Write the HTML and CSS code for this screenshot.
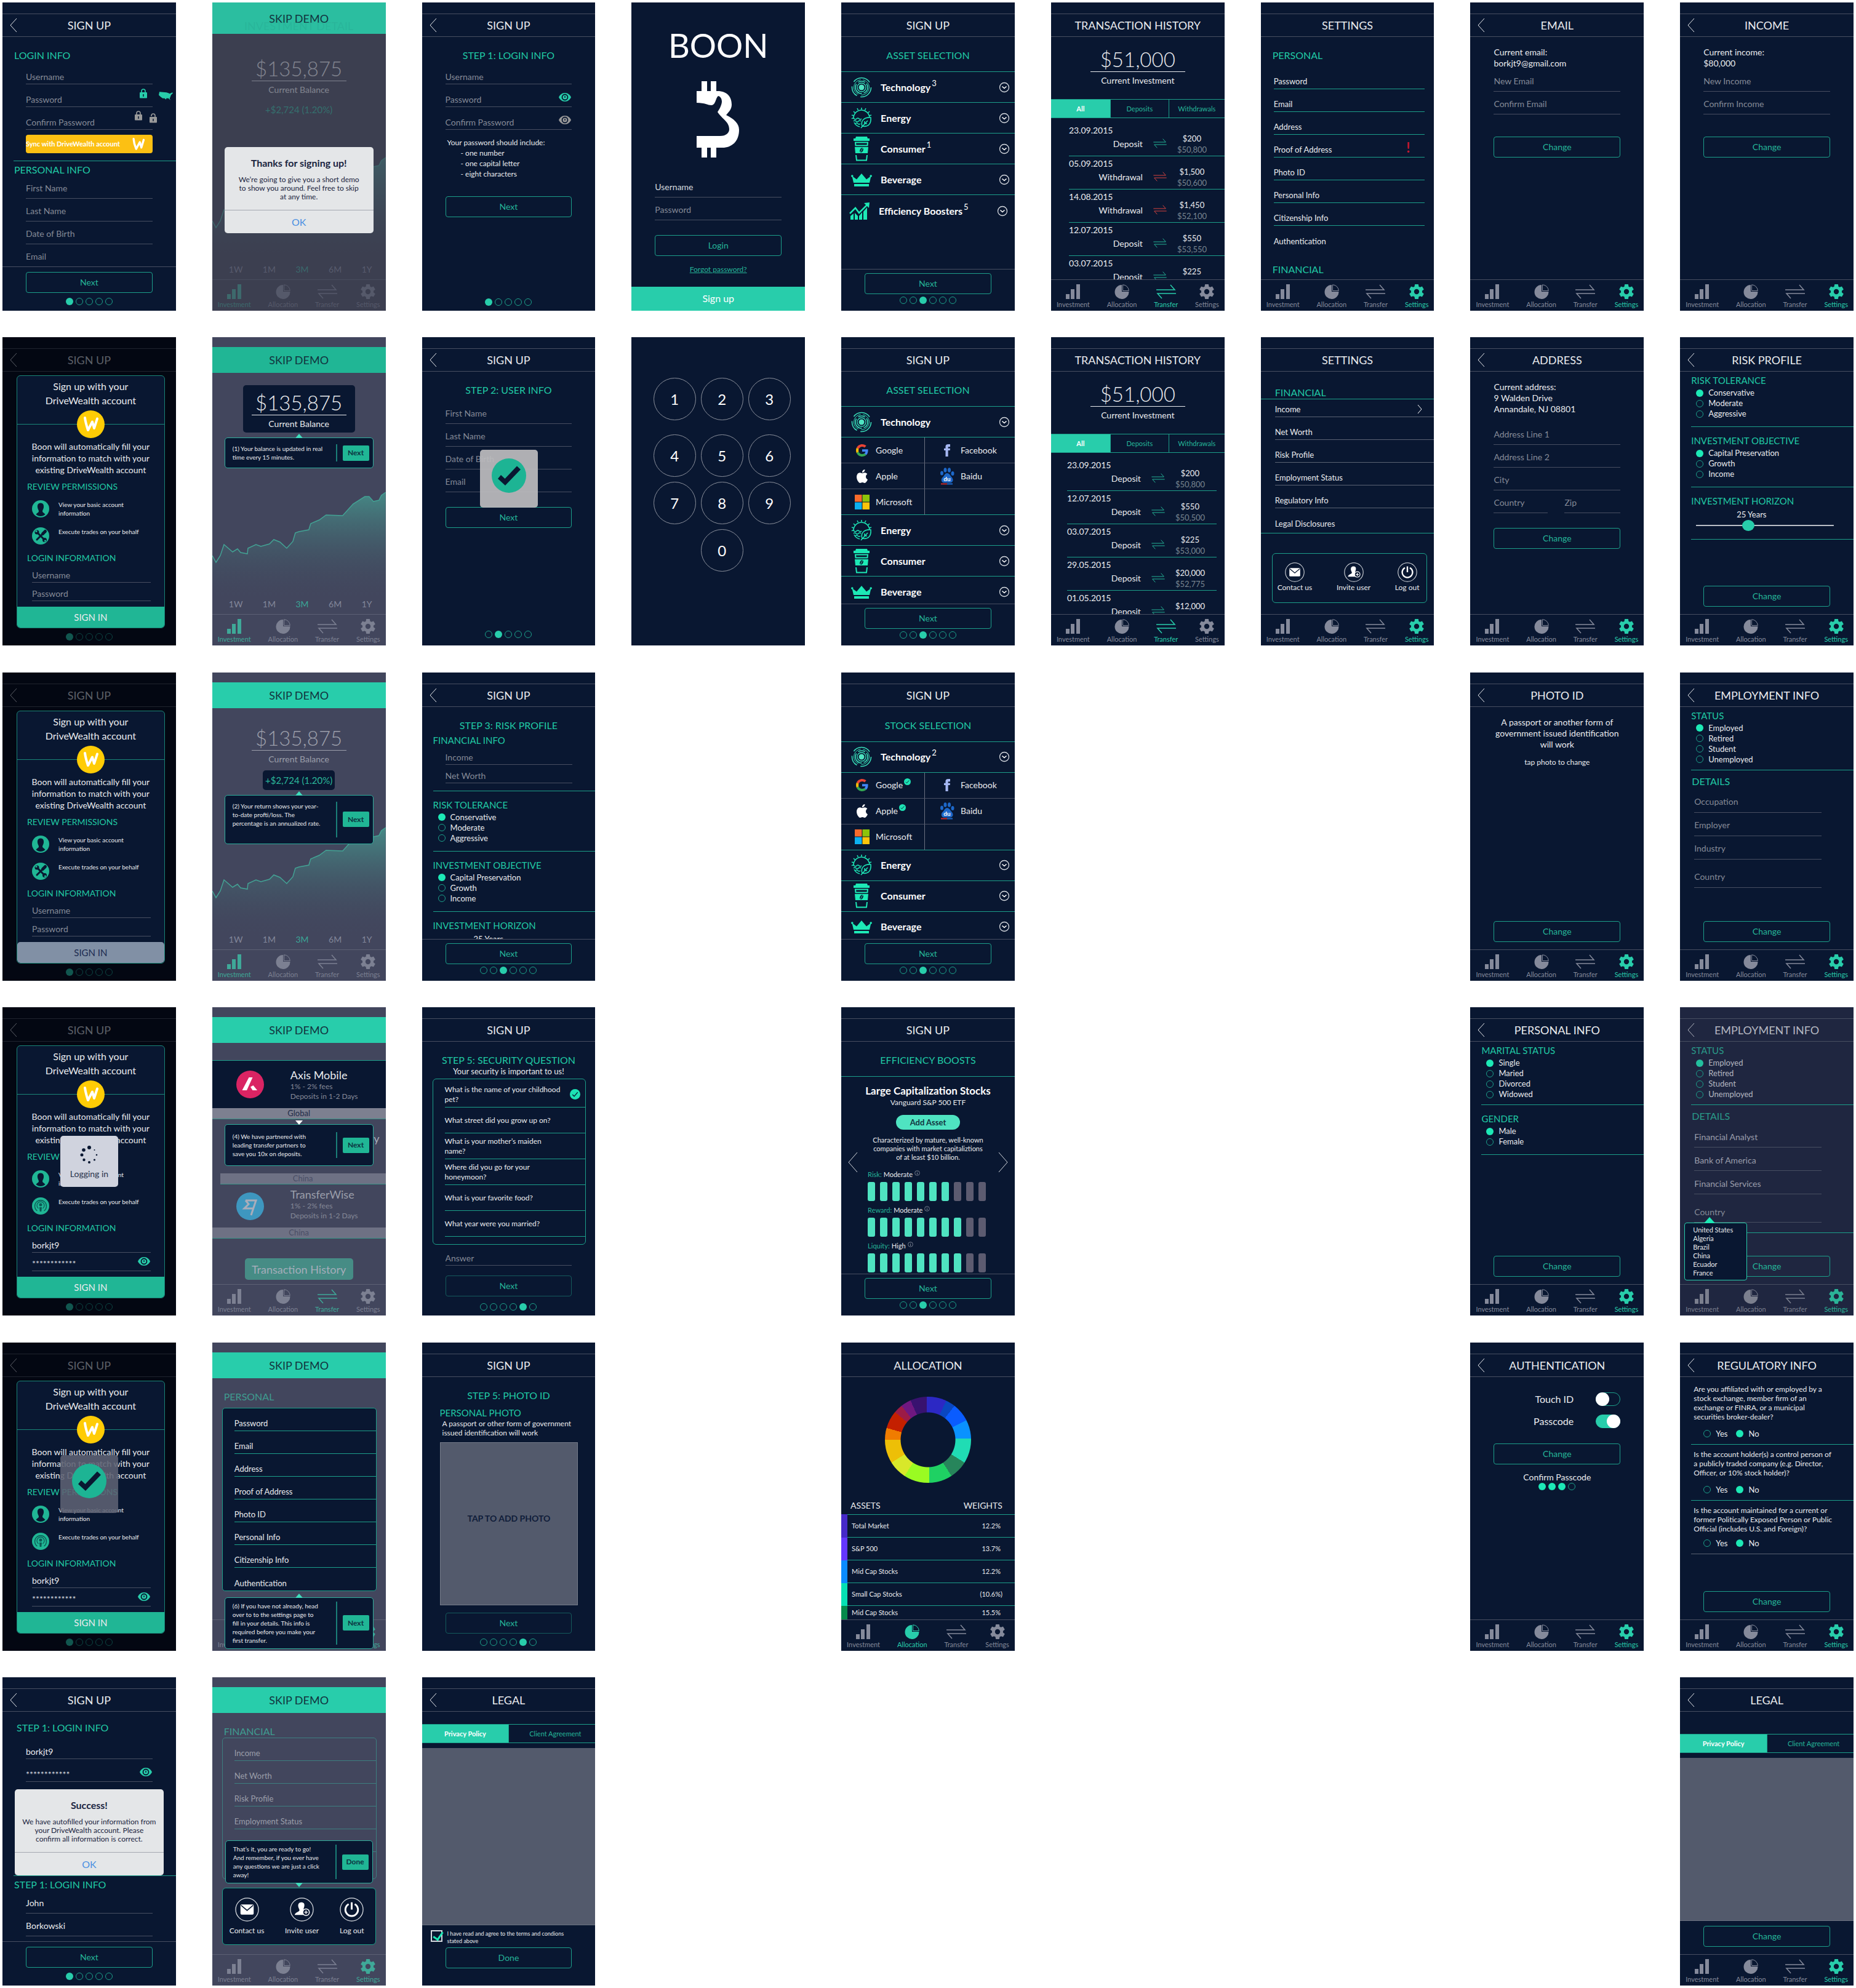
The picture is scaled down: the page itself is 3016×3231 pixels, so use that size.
FILE: index.html
```html
<!DOCTYPE html>
<html lang="en">
<head>
<meta charset="utf-8">
<title>Boon – screens</title>
<link rel="stylesheet" href="styles.css">
</head>
<body>
<svg class="sprite" aria-hidden="true">
<symbol id="back" viewBox="0 0 12 24"><path d="M11 1L1 12L11 23" fill="none" stroke="currentColor"/></symbol>
<symbol id="bars" viewBox="0 0 24 24"><path d="M0 16h6v8H0zM8 8h6v16H8zM17 0h6v24h-6z" fill="currentColor"/></symbol>
<symbol id="pie" viewBox="0 0 24 24"><path d="M12 1A11.500 11.500 0 1 0 23.500 12H12Z" fill="currentColor"/><path d="M13.500 .8A10 10 0 0 1 23.300 10.500H13.500Z" fill="none" stroke="currentColor"/></symbol>
<symbol id="swap" viewBox="0 0 32 24"><path d="M0 9H30L23 1M32 15H2L9 23" fill="none" stroke="currentColor" stroke-width="1.500"/></symbol>
<symbol id="gear" viewBox="2 2 20 20"><path fill="currentColor" d="M19.430 12.980c.04-.32.07-.64.07-.98s-.03-.66-.07-.98l2.110-1.650c.19-.15.24-.42.12-.64l-2-3.460c-.12-.22-.39-.3-.61-.22l-2.490 1c-.52-.4-1.080-.73-1.690-.98l-.38-2.650C14.460 2.180 14.250 2 14 2h-4c-.25 0-.46.18-.49.42l-.38 2.650c-.61.25-1.170.59-1.690.98l-2.490-1c-.23-.09-.49 0-.61.22l-2 3.460c-.13.22-.07.49.12.64l2.110 1.650c-.04.32-.07.65-.07.98s.03.66.07.98l-2.110 1.650c-.19.15-.24.42-.12.64l2 3.460c.12.22.39.3.61.22l2.490-1c.52.4 1.080.73 1.690.98l.38 2.650c.03.24.24.42.49.42h4c.25 0 .46-.18.49-.42l.38-2.650c.61-.25 1.170-.59 1.690-.98l2.490 1c.23.09.49 0 .61-.22l2-3.460c.12-.22.07-.49-.12-.64zM12 15.500a3.500 3.500 0 1 1 0-7a3.500 3.500 0 0 1 0 7z"/></symbol>
<symbol id="eye" viewBox="0 0 22 16"><path d="M11 1C6 1 2.500 4.500 1 8c1.500 3.500 5 7 10 7s8.500-3.500 10-7C19.500 4.500 16 1 11 1z" fill="currentColor"/><circle cx="11" cy="8" r="4.500" fill="none" stroke="#091731" stroke-width="1.800"/><path d="M11 6v3" stroke="#091731" stroke-width="1.500"/></symbol>
<symbol id="lock" viewBox="0 0 12 16"><path d="M3 7V4a3 3 0 0 1 6 0v3" fill="none" stroke="currentColor" stroke-width="1.600"/><rect y="6" width="12" height="9.500" rx="1" fill="currentColor"/><path d="M6 9v4" stroke="#091731" stroke-width="1.500"/></symbol>
<symbol id="unlock" viewBox="0 0 12 16"><path d="M3 5V4a3 3 0 0 1 6 0v3" fill="none" stroke="currentColor" stroke-width="1.600"/><rect y="6" width="12" height="9.500" rx="1" fill="currentColor"/><path d="M6 9v4" stroke="#091731" stroke-width="1.500"/></symbol>
<symbol id="usa" viewBox="0 0 22 13"><path d="M1 0L12 1L15 2L17 3L21 1L22 2L19 5L18 8L17 10L18 13L15 10L12 10L11 12L9 10L6 10L3 8L0 5Z" fill="currentColor"/></symbol>
<symbol id="wmark" viewBox="11 9 25 26"><path d="M13.500 12C14 20 16 26 18.500 31.500L25.500 18.500L28.500 29L33 14" fill="none" stroke="#fff" stroke-width="4" stroke-linecap="round" stroke-linejoin="round"/></symbol>
<symbol id="wealth" viewBox="0 0 45 45"><circle cx="22.500" cy="22.500" r="22.500" fill="#ffcc05"/><path d="M13 12C14 20 16 26 18 32L25 18.500L28 29L33 13.500" fill="none" stroke="#fff" stroke-width="4" stroke-linecap="round" stroke-linejoin="round"/></symbol>
<symbol id="person" viewBox="0 0 28 28"><circle cx="14" cy="14" r="14" fill="#20b695"/><path d="M14 4.500c-4 0-5.500 3-5 7c.4 3 1.700 4 2 6c.3 2.500-3 3-4.500 5.500c4 4 11 4 15 0C20 20.500 16.700 20 17 17.500c.3-2 1.600-3 2-6c.5-4-1-7-5-7z" fill="#091731"/></symbol>
<symbol id="tools" viewBox="0 0 28 28"><circle cx="14" cy="14" r="14" fill="#20b695"/><path d="M8 8l12 12M20 8L8 20" stroke="#091731" stroke-width="3" stroke-linecap="round"/><circle cx="8" cy="8" r="3.500" fill="#091731"/><circle cx="20.500" cy="20.500" r="3.500" fill="#091731"/><circle cx="7" cy="6.500" r="1.600" fill="#20b695"/><circle cx="21.500" cy="22" r="1.600" fill="#20b695"/><path d="M17.500 10.500l4-4" stroke="#091731" stroke-width="5" stroke-linecap="round"/></symbol>
<symbol id="cast" viewBox="0 0 28 28"><circle cx="14" cy="14" r="14" fill="#20b695"/><g fill="none" stroke="#0c5a55" stroke-width="1.300"><path d="M8.500 22a9.500 9.500 0 1 1 11 0M10.500 18a6 6 0 1 1 7 0"/></g><circle cx="14" cy="12" r="2.500" fill="#0c5a55"/><path d="M12 16h4l-.7 7h-2.600z" fill="#0c5a55"/></symbol>
<symbol id="bigcheck" viewBox="0 0 56 56"><circle cx="28" cy="28" r="28" fill="#1db494"/><path d="M10 33l5-6l6.500 6L41 12.500l6 5.500L22 44z" fill="#091731"/></symbol>
<symbol id="tick" viewBox="0 0 18 18"><circle cx="9" cy="9" r="9" fill="#1de2b4"/><path d="M4.500 9.500l3 3l6-7" fill="none" stroke="#091731" stroke-width="1.400"/></symbol>
<symbol id="down" viewBox="0 0 18 18"><circle cx="9" cy="9" r="7.500" fill="none" stroke="#d5d9df" stroke-width="1.300"/><path d="M5.500 7.500L9 10.500L12.500 7.500" fill="none" stroke="#fff" stroke-width="1.600"/></symbol>
<symbol id="tech" viewBox="0 0 34 34"><g fill="none" stroke="#38dcb8"><circle cx="17" cy="17" r="15.500" stroke-width="1.600" stroke-dasharray="26 6 18 8 30 9.300"/><circle cx="17" cy="17" r="12.500" stroke-dasharray="20 5 32 4"/><circle cx="17" cy="17" r="10" stroke-width="1.600" stroke-dasharray="12 3 22 4"/><circle cx="17" cy="17" r="7" stroke-width="1.300"/></g><circle cx="17" cy="17" r="4.500" fill="#4fe3c1"/></symbol>
<symbol id="energy" viewBox="0 0 34 34"><g fill="none" stroke="#1de2b4" stroke-width="1.600"><path d="M4 18a13 13 0 0 1 26-2M5 24a13 13 0 0 0 9 7"/><path d="M17 0v3M10 1l1.500 3M24 1l-1.500 3M4 6l2.500 2.500M30 6l-2.500 2.500M1 12l3 1M33 12l-3 1"/><path d="M1 18q2-2 4 0t4 0t4 0t4 0M4 22q2-2 4 0t4 0t4 0M7 26q2-2 4 0t4 0"/><path d="M18 30c-3-9 4-15 14-14c1 10-4 16-14 14zM16 33L27 21M22 26v-4M22 26h4"/></g></symbol>
<symbol id="cup" viewBox="0 0 26 40"><path d="M4 0h18l1 3h3v4H0V3h3zM2 17h22l-1 10H3z" fill="#1de9b6"/><path d="M3 9.500h20l-.5 5h-19zM4 30l1 8.500h16l1-8.500" fill="none" stroke="#1de9b6" stroke-width="2"/><ellipse cx="13" cy="22" rx="2.500" ry="3.800" transform="rotate(25 13 22)" fill="#091731"/><path d="M11.500 25l3-6" stroke="#1de9b6"/></symbol>
<symbol id="crown" viewBox="0 0 34 22"><path d="M4 16L1.500 5L9 10.500L17 1L25 10.500L32.500 5L30 16zM5 18h24v4H5z" fill="#1de9b6"/><circle cx="1.800" cy="5" r="1.800" fill="#1de9b6"/><circle cx="32.200" cy="5" r="1.800" fill="#1de9b6"/></symbol>
<symbol id="boost" viewBox="0 0 34 28"><path d="M2 22l5-4v10H2zM9 17l5 5v6H9zM16 22l5-6v12h-5zM23 15l6-7v20h-6z" fill="#1de9b6"/><path d="M1 18l9-9l6 8L30 3" fill="none" stroke="#1de9b6" stroke-width="2.500"/><path d="M24 1l9-1l-1 9z" fill="#1de9b6"/></symbol>
<symbol id="google" viewBox="0 0 48 48"><path fill="#EA4335" d="M24 9.500c3.540 0 6.710 1.220 9.210 3.600l6.850-6.850C35.900 2.380 30.470 0 24 0 14.620 0 6.510 5.380 2.560 13.220l7.980 6.190C12.430 13.720 17.740 9.500 24 9.500z"/><path fill="#4285F4" d="M46.980 24.550c0-1.570-.15-3.090-.38-4.550H24v9.020h12.940c-.58 2.960-2.260 5.480-4.780 7.180l7.730 6c4.510-4.180 7.090-10.360 7.090-17.650z"/><path fill="#FBBC05" d="M10.530 28.590c-.48-1.450-.76-2.990-.76-4.590s.27-3.140.76-4.590l-7.980-6.190C.92 16.460 0 20.120 0 24c0 3.880.92 7.540 2.560 10.780l7.970-6.190z"/><path fill="#34A853" d="M24 48c6.480 0 11.930-2.130 15.890-5.810l-7.730-6c-2.150 1.450-4.920 2.300-8.160 2.300-6.260 0-11.570-4.220-13.470-9.910l-7.980 6.190C6.510 42.620 14.620 48 24 48z"/></symbol>
<symbol id="apple" viewBox="0 0 24 24"><path fill="#fff" d="M12.152 6.896c-.948 0-2.415-1.078-3.960-1.040-2.040.027-3.910 1.183-4.961 3.014-2.117 3.675-.546 9.103 1.519 12.090 1.013 1.454 2.208 3.090 3.792 3.039 1.520-.065 2.090-.987 3.935-.987 1.831 0 2.350.987 3.960.948 1.637-.026 2.676-1.480 3.676-2.948 1.156-1.688 1.636-3.325 1.662-3.415-.039-.013-3.182-1.221-3.220-4.857-.026-3.040 2.480-4.494 2.597-4.559-1.429-2.090-3.623-2.324-4.390-2.376-2-.156-3.675 1.090-4.610 1.090zM15.530 3.830c.843-1.012 1.400-2.427 1.245-3.830-1.207.052-2.662.805-3.532 1.818-.780.896-1.454 2.338-1.273 3.714 1.338.104 2.715-.688 3.559-1.701"/></symbol>
<symbol id="msoft" viewBox="0 0 24 24"><path fill="#f86a2b" d="M0 0h11.500v11.500H0z"/><path fill="#8cc40a" d="M12.500 0H24v11.500H12.500z"/><path fill="#0cb0f0" d="M0 12.500h11.500V24H0z"/><path fill="#fbc40b" d="M12.500 12.500H24V24H12.500z"/></symbol>
<symbol id="fbook" viewBox="5 0 14 24"><path fill="#a5b7f2" d="M9 8H6v4h3v12h5V12h3.642L18 8h-4V6.333C14 5.378 14.192 5 15.115 5H18V0h-3.808C10.596 0 9 1.583 9 4.615z"/></symbol>
<symbol id="baidu" viewBox="0 0 24 28"><g fill="#1d68c9"><ellipse cx="3.500" cy="9" rx="2.500" ry="3.500"/><ellipse cx="9" cy="4" rx="2.500" ry="3.800"/><ellipse cx="15.500" cy="4" rx="2.500" ry="3.800"/><ellipse cx="21" cy="9.500" rx="2.500" ry="3.500"/><path d="M12 9c-4 0-4 4-7 6.500C1 19 3 25 7 24.500h10c5 0 6-5.500 2.500-9C17 13 16 9 12 9z"/></g><text x="12" y="22" text-anchor="middle" font-family="Lato, sans-serif" font-weight="700" font-size="10" fill="#fff">du</text><path d="M2 26.500h10" stroke="#c22a2a" stroke-width="2"/><path d="M12 26.500h9" stroke="#1d68c9" stroke-width="2"/></symbol>
<symbol id="mail" viewBox="0 0 40 40"><circle cx="20" cy="20" r="19" fill="none" stroke="#dfe2e6" stroke-width="1.300"/><rect x="9" y="11.500" width="22" height="17" rx="2" fill="#fff"/><path d="M10 13l10 8.500L30 13" fill="none" stroke="#091731" stroke-width="1.600"/></symbol>
<symbol id="invite" viewBox="0 0 40 40"><circle cx="20" cy="20" r="19" fill="none" stroke="#dfe2e6" stroke-width="1.300"/><path d="M19 8c-4 0-5.500 3-5 7c.5 3 2 4 2 6c0 3-7 3-8 8h16v-7c-2-1-1-4 0-7c1-5-1-7-5-7z" fill="#fff"/><circle cx="27" cy="24.500" r="5.500" fill="#091731" stroke="#fff" stroke-width="1.500"/><path d="M27 21.500v6M24 24.500h6" stroke="#fff" stroke-width="1.500"/></symbol>
<symbol id="power" viewBox="0 0 40 40"><circle cx="20" cy="20" r="19" fill="none" stroke="#dfe2e6" stroke-width="1.300"/><path d="M15 11a10.500 10.500 0 1 0 10 0M20 8v12" fill="none" stroke="#fff" stroke-width="3"/></symbol>
<symbol id="axis" viewBox="0 0 45 45"><circle cx="22.500" cy="22.500" r="22.500" fill="#da2463"/><path d="M20.500 11h6L17 32H9.500zM23 26.500l4.500-2.500L34 32h-7.500z" fill="#fff"/></symbol>
<symbol id="wise" viewBox="0 0 45 45"><circle cx="22.500" cy="22.500" r="22.500" fill="#3e97bf"/><path d="M15 13H32L24 37M15 13L20 19L13 26H26.500" fill="none" stroke="#a9adba" stroke-width="3"/></symbol>
<symbol id="boon" viewBox="0 0 70 124"><path fill="#fff" d="M8 0h9v16h6V0h9v16h2C50 16 57 26 57 38C57 46 52 50 48 55C60 61 69 68 69 79C69 98 57 108 42 108H32V124H23V108H17V124H8V108H0V89H38C48 89 53 84 53 78C53 66 42 62 34 50C37 46 41 38 41 33C41 27 37 24 35 24C31 27 31 39 24 39C18 39 14 35 0 35V16H8Z"/></symbol>
<symbol id="spin" viewBox="0 0 30 30"><g fill="#091731"><circle cx="15" cy="3" r="3"/><circle cx="6" cy="7" r="2.800"/><circle cx="3" cy="15" r="2.500"/><circle cx="6.500" cy="23" r="2.200"/><circle cx="15" cy="27" r="2"/><circle cx="23.500" cy="23" r="1.600"/><circle cx="27" cy="15" r="1.300"/><circle cx="23.500" cy="7" r="1"/></g></symbol>
<symbol id="info" viewBox="0 0 10 10"><circle cx="5" cy="5" r="4.300" fill="none" stroke="#9aa0ad" stroke-width=".8"/><path d="M5 2.500v.8M5 4.500v3" stroke="#9aa0ad"/></symbol>
<symbol id="chart" viewBox="0 0 282 180" preserveAspectRatio="none"><linearGradient id="fade" x1="0" y1="0" x2="0" y2="1"><stop offset="0" stop-color="#469a90" stop-opacity=".8"/><stop offset="1" stop-color="#42465d" stop-opacity="0"/></linearGradient><path d="M0 105L6 116L13 105L19 87L33 99L41 94L46 100L57 102L58 93L71 87L79 90L93 86L100 79L110 83L121 93L131 82L135 68L141 66L157 63L160 53L174 47L185 39L212 40L229 21L248 9L255 9L262 17L271 15L275 7L282 2V180H0Z" fill="url(#fade)"/><path d="M0 105L6 116L13 105L19 87L33 99L41 94L46 100L57 102L58 93L71 87L79 90L93 86L100 79L110 83L121 93L131 82L135 68L141 66L157 63L160 53L174 47L185 39L212 40L229 21L248 9L255 9L262 17L271 15L275 7L282 2" fill="none" stroke="#43a294" stroke-width="1.500"/></symbol>
</svg>
<main class="board">

<!-- Row 1 -->
<section class="phone">
<header class="bar"><a class="back" href="#" aria-label="Back"><svg><use href="#back"/></svg></a><h2>SIGN UP</h2></header>
<div class="body">
<h3 class="sec mt20">LOGIN INFO</h3>
<div class="form"><input class="field tight" placeholder="Username" aria-label="Username"><input class="field tight" placeholder="Password" aria-label="Password"><input class="field tight" placeholder="Confirm Password" aria-label="Confirm password"><button class="sync mt8"><span>Sync with DriveWealth account</span><svg width="21" height="22"><use href="#wmark"/></svg></button></div>
<hr class="rule mt12"><h3 class="sec mt4">PERSONAL INFO</h3>
<div class="form"><input class="field" placeholder="First Name" aria-label="First name"><input class="field" placeholder="Last Name" aria-label="Last name"><input class="field" placeholder="Date of Birth" aria-label="Date of birth"><input class="field" placeholder="Email" aria-label="Email"></div>
</div>
<footer class="foot tall"><button class="btn">Next</button><div class="dots"><i class="on"></i><i></i><i></i><i></i><i></i></div></footer>
<svg class="pin lock-a" width="12" height="16"><use href="#lock"/></svg><svg class="pin usa" width="23" height="14"><use href="#usa"/></svg><svg class="pin lock-b" width="12" height="16"><use href="#lock"/></svg><svg class="pin lock-c" width="12" height="16"><use href="#unlock"/></svg>
</section>

<section class="phone demo faint">
<button class="skip big">SKIP DEMO</button>
<h2 class="ghost">INVESTMENT DETAIL</h2>
<svg class="chart"><use href="#chart"/></svg>
<div class="body"><div class="balance mt16"><strong>$135,875</strong><span>Current Balance</span></div><p class="gain mt12">+$2,724 (1.20%)</p></div>
<div class="range"><span>1W</span><span>1M</span><b>3M</b><span>6M</span><span>1Y</span></div>
<nav class="tabs t1"><a href="#"><svg><use href="#bars"/></svg>Investment</a><a href="#"><svg><use href="#pie"/></svg>Allocation</a><a href="#"><svg class="w"><use href="#swap"/></svg>Transfer</a><a href="#"><svg><use href="#gear"/></svg>Settings</a></nav>
<div class="modal thanks"><h3>Thanks for signing up!</h3><p>We’re going to give you a short demo<br>to show you around. Feel free to skip<br>at any time.</p><button>OK</button></div>
</section>

<section class="phone">
<header class="bar"><a class="back" href="#" aria-label="Back"><svg><use href="#back"/></svg></a><h2>SIGN UP</h2></header>
<div class="body">
<h3 class="sec mid mt20">STEP 1: LOGIN INFO</h3>
<div class="form"><input class="field tight" placeholder="Username" aria-label="Username"><label class="secret"><input class="field tight" placeholder="Password" aria-label="Password"><svg><use href="#eye"/></svg></label><label class="secret off"><input class="field tight" placeholder="Confirm Password" aria-label="Confirm password"><svg><use href="#eye"/></svg></label>
<div class="hint mt12"><p>Your password should include:</p><ul><li>- one number</li><li>- one capital letter</li><li>- eight characters</li></ul></div>
<button class="btn mt28">Next</button></div>
<div class="dots push mb8"><i class="on"></i><i></i><i></i><i></i><i></i></div>
</div>
</section>

<section class="phone">
<h1 class="brand">BOON</h1>
<svg class="logo"><use href="#boon"/></svg>
<div class="form mt28"><input class="field bright" placeholder="Username" aria-label="Username"><input class="field" placeholder="Password" aria-label="Password"><button class="btn mt24">Login</button></div>
<a class="forgot mt12" href="#">Forgot password?</a>
<button class="signup push">Sign up</button>
</section>

<section class="phone">
<header class="bar"><h2>SIGN UP</h2></header>
<div class="body">
<h3 class="sec mid mt20">ASSET SELECTION</h3>
<ul class="assets mt16">
<li><svg width="34" height="34"><use href="#tech"/></svg><span>Technology<sup>3</sup></span><svg width="18" height="18"><use href="#down"/></svg></li>
<li><svg width="34" height="34"><use href="#energy"/></svg><span>Energy</span><svg width="18" height="18"><use href="#down"/></svg></li>
<li><svg width="26" height="40"><use href="#cup"/></svg><span>Consumer<sup>1</sup></span><svg width="18" height="18"><use href="#down"/></svg></li>
<li><svg width="34" height="22"><use href="#crown"/></svg><span>Beverage</span><svg width="18" height="18"><use href="#down"/></svg></li>
<li class="last"><svg width="34" height="28"><use href="#boost"/></svg><span>Efficiency Boosters<sup>5</sup></span><svg width="18" height="18"><use href="#down"/></svg></li>
</ul></div>
<footer class="foot"><button class="btn">Next</button><div class="dots"><i></i><i></i><i class="on"></i><i></i><i></i><i></i></div></footer>
</section>

<section class="phone">
<header class="bar"><h2>TRANSACTION HISTORY</h2></header>
<div class="body">
<div class="balance mt16"><strong>$51,000</strong><span>Current Investment</span></div>
<div class="switch three mt20"><button class="on">All</button><button>Deposits</button><button>Withdrawals</button></div>
<ul class="moves">
<li><div><time>23.09.2015</time><span>Deposit</span></div><svg><use href="#swap"/></svg><p>$200<small>$50,800</small></p></li>
<li class="out"><div><time>05.09.2015</time><span>Withdrawal</span></div><svg><use href="#swap"/></svg><p>$1,500<small>$50,600</small></p></li>
<li class="out"><div><time>14.08.2015</time><span>Withdrawal</span></div><svg><use href="#swap"/></svg><p>$1,450<small>$52,100</small></p></li>
<li><div><time>12.07.2015</time><span>Deposit</span></div><svg><use href="#swap"/></svg><p>$550<small>$53,550</small></p></li>
<li><div><time>03.07.2015</time><span>Deposit</span></div><svg><use href="#swap"/></svg><p>$225</p></li>
</ul></div>
<nav class="tabs t3"><a href="#"><svg><use href="#bars"/></svg>Investment</a><a href="#"><svg><use href="#pie"/></svg>Allocation</a><a href="#"><svg class="w"><use href="#swap"/></svg>Transfer</a><a href="#"><svg><use href="#gear"/></svg>Settings</a></nav>
</section>

<section class="phone">
<header class="bar"><h2>SETTINGS</h2></header>
<div class="body">
<h3 class="sec mt20">PERSONAL</h3>
<ul class="menu mt8"><li>Password</li><li>Email</li><li>Address</li><li>Proof of Address<b class="alert">!</b></li><li>Photo ID</li><li>Personal Info</li><li>Citizenship Info</li><li>Authentication</li></ul>
<h3 class="sec mt24">FINANCIAL</h3></div>
<nav class="tabs t4"><a href="#"><svg><use href="#bars"/></svg>Investment</a><a href="#"><svg><use href="#pie"/></svg>Allocation</a><a href="#"><svg class="w"><use href="#swap"/></svg>Transfer</a><a href="#"><svg><use href="#gear"/></svg>Settings</a></nav>
</section>

<section class="phone">
<header class="bar"><a class="back" href="#" aria-label="Back"><svg><use href="#back"/></svg></a><h2>EMAIL</h2></header>
<div class="body"><div class="form mt16"><p class="now">Current email:<br>borkjt9@gmail.com</p><input class="field" placeholder="New Email" aria-label="New email"><input class="field" placeholder="Confirm Email" aria-label="Confirm email"><button class="btn mt36">Change</button></div></div>
<nav class="tabs t4"><a href="#"><svg><use href="#bars"/></svg>Investment</a><a href="#"><svg><use href="#pie"/></svg>Allocation</a><a href="#"><svg class="w"><use href="#swap"/></svg>Transfer</a><a href="#"><svg><use href="#gear"/></svg>Settings</a></nav>
</section>

<section class="phone">
<header class="bar"><a class="back" href="#" aria-label="Back"><svg><use href="#back"/></svg></a><h2>INCOME</h2></header>
<div class="body"><div class="form mt16"><p class="now">Current income:<br>$80,000</p><input class="field" placeholder="New Income" aria-label="New income"><input class="field" placeholder="Confirm Income" aria-label="Confirm income"><button class="btn mt36">Change</button></div></div>
<nav class="tabs t4"><a href="#"><svg><use href="#bars"/></svg>Investment</a><a href="#"><svg><use href="#pie"/></svg>Allocation</a><a href="#"><svg class="w"><use href="#swap"/></svg>Transfer</a><a href="#"><svg><use href="#gear"/></svg>Settings</a></nav>
</section>

<!-- Row 2 -->
<section class="phone dark">
<header class="bar"><a class="back" href="#" aria-label="Back"><svg><use href="#back"/></svg></a><h2>SIGN UP</h2></header>
<div class="partner">
<h3>Sign up with your<br>DriveWealth account</h3><svg class="seal"><use href="#wealth"/></svg>
<p class="lead">Boon will automatically fill your<br>information to match with your<br>existing DriveWealth account</p>
<h4>REVIEW PERMISSIONS</h4>
<ul class="perms"><li><svg><use href="#person"/></svg>View your basic account<br>information</li><li><svg><use href="#tools"/></svg>Execute trades on your behalf</li></ul>
<h4>LOGIN INFORMATION</h4>
<div class="login"><input class="field short" placeholder="Username" aria-label="Username"><input class="field short" placeholder="Password" aria-label="Password"></div>
<button class="signin">SIGN IN</button></div>
<div class="dots push mb8"><i class="on"></i><i></i><i></i><i></i><i></i></div>
</section>

<section class="phone demo">
<button class="skip deep">SKIP DEMO</button>
<svg class="chart"><use href="#chart"/></svg>
<div class="body"><div class="balance lit mt20"><strong>$135,875</strong><span>Current Balance</span></div>
<div class="tip up mt8"><p>(1) Your balance is updated in real<br>time every 15 minutes.</p><button>Next</button></div></div>
<div class="range"><span>1W</span><span>1M</span><b>3M</b><span>6M</span><span>1Y</span></div>
<nav class="tabs t1"><a href="#"><svg><use href="#bars"/></svg>Investment</a><a href="#"><svg><use href="#pie"/></svg>Allocation</a><a href="#"><svg class="w"><use href="#swap"/></svg>Transfer</a><a href="#"><svg><use href="#gear"/></svg>Settings</a></nav>
</section>

<section class="phone">
<header class="bar"><a class="back" href="#" aria-label="Back"><svg><use href="#back"/></svg></a><h2>SIGN UP</h2></header>
<div class="body"><h3 class="sec mid mt20">STEP 2: USER INFO</h3>
<div class="form mt8"><input class="field" placeholder="First Name" aria-label="First name"><input class="field" placeholder="Last Name" aria-label="Last name"><input class="field" placeholder="Date of Birth" aria-label="Date of birth"><input class="field" placeholder="Email" aria-label="Email"><button class="btn mt24">Next</button></div>
<div class="dots push mb12"><i></i><i class="on"></i><i></i><i></i><i></i></div></div>
<div class="pop done"><svg width="56" height="56"><use href="#bigcheck"/></svg></div>
</section>

<section class="phone">
<div class="keys"><button>1</button><button>2</button><button>3</button><button>4</button><button>5</button><button>6</button><button>7</button><button>8</button><button>9</button><button class="zero">0</button></div>
</section>

<section class="phone">
<header class="bar"><h2>SIGN UP</h2></header>
<div class="body">
<h3 class="sec mid mt20">ASSET SELECTION</h3>
<ul class="assets mt16">
<li><svg width="34" height="34"><use href="#tech"/></svg><span>Technology</span><svg width="18" height="18"><use href="#down"/></svg></li></ul>
<ul class="stocks"><li><svg width="20" height="20"><use href="#google"/></svg>Google</li><li><svg width="12" height="20"><use href="#fbook"/></svg>Facebook</li><li><svg width="22" height="24"><use href="#apple"/></svg>Apple</li><li><svg width="24" height="28"><use href="#baidu"/></svg>Baidu</li><li><svg width="24" height="24"><use href="#msoft"/></svg>Microsoft</li><li></li></ul>
<ul class="assets">
<li><svg width="34" height="34"><use href="#energy"/></svg><span>Energy</span><svg width="18" height="18"><use href="#down"/></svg></li>
<li><svg width="26" height="40"><use href="#cup"/></svg><span>Consumer</span><svg width="18" height="18"><use href="#down"/></svg></li>
<li><svg width="34" height="22"><use href="#crown"/></svg><span>Beverage</span><svg width="18" height="18"><use href="#down"/></svg></li>
</ul></div>
<footer class="foot"><button class="btn">Next</button><div class="dots"><i></i><i></i><i class="on"></i><i></i><i></i><i></i></div></footer>
</section>

<section class="phone">
<header class="bar"><h2>TRANSACTION HISTORY</h2></header>
<div class="body">
<div class="balance mt16"><strong>$51,000</strong><span>Current Investment</span></div>
<div class="switch three mt20"><button class="on">All</button><button>Deposits</button><button>Withdrawals</button></div>
<ul class="moves inset">
<li><div><time>23.09.2015</time><span>Deposit</span></div><svg><use href="#swap"/></svg><p>$200<small>$50,800</small></p></li>
<li><div><time>12.07.2015</time><span>Deposit</span></div><svg><use href="#swap"/></svg><p>$550<small>$50,500</small></p></li>
<li><div><time>03.07.2015</time><span>Deposit</span></div><svg><use href="#swap"/></svg><p>$225<small>$53,000</small></p></li>
<li><div><time>29.05.2015</time><span>Deposit</span></div><svg><use href="#swap"/></svg><p>$20,000<small>$52,775</small></p></li>
<li><div><time>01.05.2015</time><span>Deposit</span></div><svg><use href="#swap"/></svg><p>$12,000</p></li>
</ul></div>
<nav class="tabs t3"><a href="#"><svg><use href="#bars"/></svg>Investment</a><a href="#"><svg><use href="#pie"/></svg>Allocation</a><a href="#"><svg class="w"><use href="#swap"/></svg>Transfer</a><a href="#"><svg><use href="#gear"/></svg>Settings</a></nav>
</section>

<section class="phone">
<header class="bar"><h2>SETTINGS</h2></header>
<div class="body">
<h3 class="sec in mt24">FINANCIAL</h3>
<ul class="menu plain"><li>Income<svg width="8" height="16"><path d="M1 1L7 8L1 15" fill="none" stroke="#fff"/></svg></li><li>Net Worth</li><li>Risk Profile</li><li>Employment Status</li><li>Regulatory Info</li><li>Legal Disclosures</li></ul>
<div class="quick mt32"><a href="#"><svg><use href="#mail"/></svg>Contact us</a><a href="#"><svg><use href="#invite"/></svg>Invite user</a><a href="#"><svg><use href="#power"/></svg>Log out</a></div></div>
<nav class="tabs t4"><a href="#"><svg><use href="#bars"/></svg>Investment</a><a href="#"><svg><use href="#pie"/></svg>Allocation</a><a href="#"><svg class="w"><use href="#swap"/></svg>Transfer</a><a href="#"><svg><use href="#gear"/></svg>Settings</a></nav>
</section>

<section class="phone">
<header class="bar"><a class="back" href="#" aria-label="Back"><svg><use href="#back"/></svg></a><h2>ADDRESS</h2></header>
<div class="body"><div class="form mt16"><p class="now">Current address:<br>9 Walden Drive<br>Annandale, NJ 08801</p><input class="field mt12" placeholder="Address Line 1" aria-label="Address line 1"><input class="field" placeholder="Address Line 2" aria-label="Address line 2"><input class="field" placeholder="City" aria-label="City"><div class="pair"><input class="field" placeholder="Country" aria-label="Country"><input class="field" placeholder="Zip" aria-label="Zip"></div><button class="btn mt24">Change</button></div></div>
<nav class="tabs t4"><a href="#"><svg><use href="#bars"/></svg>Investment</a><a href="#"><svg><use href="#pie"/></svg>Allocation</a><a href="#"><svg class="w"><use href="#swap"/></svg>Transfer</a><a href="#"><svg><use href="#gear"/></svg>Settings</a></nav>
</section>

<section class="phone">
<header class="bar"><a class="back" href="#" aria-label="Back"><svg><use href="#back"/></svg></a><h2>RISK PROFILE</h2></header>
<div class="body">
<div class="grp mt4"><h3>RISK TOLERANCE</h3><div class="radios"><label><input type="radio" name="a1" checked>Conservative</label><label><input type="radio" name="a1">Moderate</label><label><input type="radio" name="a1">Aggressive</label></div></div>
<div class="grp mt12"><h3>INVESTMENT OBJECTIVE</h3><div class="radios"><label><input type="radio" name="a2" checked>Capital Preservation</label><label><input type="radio" name="a2">Growth</label><label><input type="radio" name="a2">Income</label></div></div>
<div class="grp mt12"><h3>INVESTMENT HORIZON</h3><label class="years"><span>25 Years</span><input type="range" min="0" max="68" value="25"></label></div>
<button class="btn push mb12 solo">Change</button></div>
<nav class="tabs t4"><a href="#"><svg><use href="#bars"/></svg>Investment</a><a href="#"><svg><use href="#pie"/></svg>Allocation</a><a href="#"><svg class="w"><use href="#swap"/></svg>Transfer</a><a href="#"><svg><use href="#gear"/></svg>Settings</a></nav>
</section>

<!-- Row 3 -->
<section class="phone dark">
<header class="bar"><a class="back" href="#" aria-label="Back"><svg><use href="#back"/></svg></a><h2>SIGN UP</h2></header>
<div class="partner">
<h3>Sign up with your<br>DriveWealth account</h3><svg class="seal"><use href="#wealth"/></svg>
<p class="lead">Boon will automatically fill your<br>information to match with your<br>existing DriveWealth account</p>
<h4>REVIEW PERMISSIONS</h4>
<ul class="perms"><li><svg><use href="#person"/></svg>View your basic account<br>information</li><li><svg><use href="#tools"/></svg>Execute trades on your behalf</li></ul>
<h4>LOGIN INFORMATION</h4>
<div class="login"><input class="field short" placeholder="Username" aria-label="Username"><input class="field short" placeholder="Password" aria-label="Password"></div>
<button class="signin idle">SIGN IN</button></div>
<div class="dots push mb8"><i class="on"></i><i></i><i></i><i></i><i></i></div>
</section>

<section class="phone demo">
<button class="skip">SKIP DEMO</button>
<svg class="chart"><use href="#chart"/></svg>
<div class="body"><div class="balance dim mt28"><strong>$135,875</strong><span>Current Balance</span></div><p class="gain lit mt8">+$2,724 (1.20%)</p>
<div class="tip up high mt8"><p>(2) Your return shows your year-<br>to-date profti/loss. The<br>percentage is an annualized rate.</p><button>Next</button></div></div>
<div class="range"><span>1W</span><span>1M</span><b>3M</b><span>6M</span><span>1Y</span></div>
<nav class="tabs t1"><a href="#"><svg><use href="#bars"/></svg>Investment</a><a href="#"><svg><use href="#pie"/></svg>Allocation</a><a href="#"><svg class="w"><use href="#swap"/></svg>Transfer</a><a href="#"><svg><use href="#gear"/></svg>Settings</a></nav>
</section>

<section class="phone">
<header class="bar"><a class="back" href="#" aria-label="Back"><svg><use href="#back"/></svg></a><h2>SIGN UP</h2></header>
<div class="body"><h3 class="sec mid mt20">STEP 3: RISK PROFILE</h3>
<div class="grp mt4"><h3>FINANCIAL INFO</h3><div class="login"><input class="field short" placeholder="Income" aria-label="Income"><input class="field short" placeholder="Net Worth" aria-label="Net worth"></div></div>
<div class="grp mt12"><h3>RISK TOLERANCE</h3><div class="radios"><label><input type="radio" name="b1" checked>Conservative</label><label><input type="radio" name="b1">Moderate</label><label><input type="radio" name="b1">Aggressive</label></div></div>
<div class="grp mt12"><h3>INVESTMENT OBJECTIVE</h3><div class="radios"><label><input type="radio" name="b2" checked>Capital Preservation</label><label><input type="radio" name="b2">Growth</label><label><input type="radio" name="b2">Income</label></div></div>
<div class="grp mt12"><h3>INVESTMENT HORIZON</h3><p class="years">25 Years</p></div></div>
<footer class="foot"><button class="btn">Next</button><div class="dots"><i></i><i></i><i class="on"></i><i></i><i></i><i></i></div></footer>
</section>

<section class="phone c5">
<header class="bar"><h2>SIGN UP</h2></header>
<div class="body">
<h3 class="sec mid mt20">STOCK SELECTION</h3>
<ul class="assets mt16">
<li><svg width="34" height="34"><use href="#tech"/></svg><span>Technology<sup>2</sup></span><svg width="18" height="18"><use href="#down"/></svg></li></ul>
<ul class="stocks"><li><svg width="20" height="20"><use href="#google"/></svg>Google<svg class="tick"><use href="#tick"/></svg></li><li><svg width="12" height="20"><use href="#fbook"/></svg>Facebook</li><li><svg width="22" height="24"><use href="#apple"/></svg>Apple<svg class="tick"><use href="#tick"/></svg></li><li><svg width="24" height="28"><use href="#baidu"/></svg>Baidu</li><li><svg width="24" height="24"><use href="#msoft"/></svg>Microsoft</li><li></li></ul>
<ul class="assets">
<li><svg width="34" height="34"><use href="#energy"/></svg><span>Energy</span><svg width="18" height="18"><use href="#down"/></svg></li>
<li><svg width="26" height="40"><use href="#cup"/></svg><span>Consumer</span><svg width="18" height="18"><use href="#down"/></svg></li>
<li><svg width="34" height="22"><use href="#crown"/></svg><span>Beverage</span><svg width="18" height="18"><use href="#down"/></svg></li>
</ul></div>
<footer class="foot"><button class="btn">Next</button><div class="dots"><i></i><i></i><i class="on"></i><i></i><i></i><i></i></div></footer>
</section>

<section class="phone c8">
<header class="bar"><a class="back" href="#" aria-label="Back"><svg><use href="#back"/></svg></a><h2>PHOTO ID</h2></header>
<div class="body"><p class="now center mt16">A passport or another form of<br>government issued identification<br>will work</p><p class="small center mt12">tap photo to change</p>
<button class="btn push mb12 solo">Change</button></div>
<nav class="tabs t4"><a href="#"><svg><use href="#bars"/></svg>Investment</a><a href="#"><svg><use href="#pie"/></svg>Allocation</a><a href="#"><svg class="w"><use href="#swap"/></svg>Transfer</a><a href="#"><svg><use href="#gear"/></svg>Settings</a></nav>
</section>

<section class="phone">
<header class="bar"><a class="back" href="#" aria-label="Back"><svg><use href="#back"/></svg></a><h2>EMPLOYMENT INFO</h2></header>
<div class="body">
<div class="grp near mt4"><h3>STATUS</h3><div class="radios"><label><input type="radio" name="c1" checked>Employed</label><label><input type="radio" name="c1">Retired</label><label><input type="radio" name="c1">Student</label><label><input type="radio" name="c1">Unemployed</label></div></div>
<h3 class="sec mt8">DETAILS</h3>
<div class="job mt4"><input class="field" placeholder="Occupation" aria-label="Occupation"><input class="field" placeholder="Employer" aria-label="Employer"><input class="field" placeholder="Industry" aria-label="Industry"><input class="field mt8" placeholder="Country" aria-label="Country"></div>
<button class="btn push mb12 solo">Change</button></div>
<nav class="tabs t4"><a href="#"><svg><use href="#bars"/></svg>Investment</a><a href="#"><svg><use href="#pie"/></svg>Allocation</a><a href="#"><svg class="w"><use href="#swap"/></svg>Transfer</a><a href="#"><svg><use href="#gear"/></svg>Settings</a></nav>
</section>

<!-- Row 4 -->
<section class="phone dark">
<header class="bar"><a class="back" href="#" aria-label="Back"><svg><use href="#back"/></svg></a><h2>SIGN UP</h2></header>
<div class="partner">
<h3>Sign up with your<br>DriveWealth account</h3><svg class="seal"><use href="#wealth"/></svg>
<p class="lead">Boon will automatically fill your<br>information to match with your<br>existing DriveWealth account</p>
<h4>REVIEW PERMISSIONS</h4>
<ul class="perms"><li><svg><use href="#person"/></svg>View your basic account<br>information</li><li><svg><use href="#cast"/></svg>Execute trades on your behalf</li></ul>
<h4>LOGIN INFORMATION</h4>
<div class="login"><input class="field short" value="borkjt9" aria-label="Username"><label class="secret"><input class="field short" value="************" aria-label="Password"><svg><use href="#eye"/></svg></label></div>
<button class="signin">SIGN IN</button></div>
<div class="dots push mb8"><i class="on"></i><i></i><i></i><i></i><i></i></div>
<div class="pop wait"><svg width="30" height="30"><use href="#spin"/></svg>Logging in</div>
</section>

<section class="phone demo">
<button class="skip">SKIP DEMO</button>
<div class="body">
<div class="agent lit mt28"><svg><use href="#axis"/></svg><div><h3>Axis Mobile</h3><p>1% - 2% fees<br>Deposits in 1-2 Days</p></div></div><p class="zone first">Global</p>
<div class="tip flag mt8"><p>(4) We have partnered with<br>leading transfer partners to<br>save you 10x on deposits.</p><button>Next</button></div>
<p class="zone part mt12">China</p>
<div class="agent"><svg><use href="#wise"/></svg><div><h3>TransferWise</h3><p>1% - 2% fees<br>Deposits in 1-2 Days</p></div></div><p class="zone">China</p>
<button class="history mt32">Transaction History</button>
<span class="pin stray">y</span></div>
<nav class="tabs t3"><a href="#"><svg><use href="#bars"/></svg>Investment</a><a href="#"><svg><use href="#pie"/></svg>Allocation</a><a href="#"><svg class="w"><use href="#swap"/></svg>Transfer</a><a href="#"><svg><use href="#gear"/></svg>Settings</a></nav>
</section>

<section class="phone">
<header class="bar"><h2>SIGN UP</h2></header>
<div class="body"><h3 class="sec mid mt20">STEP 5: SECURITY QUESTION</h3><p class="sub center">Your security is important to us!</p>
<ul class="asks mt4"><li>What is the name of your childhood<br>pet?<svg class="pick"><use href="#tick"/></svg></li><li>What street did you grow up on?</li><li>What is your mother’s maiden<br>name?</li><li>Where did you go for your<br>honeymoon?</li><li>What is your favorite food?</li><li>What year were you married?</li></ul>
<div class="form mt4"><input class="field short" placeholder="Answer" aria-label="Answer"><button class="btn mt16 quiet">Next</button></div>
<div class="dots push mb8"><i></i><i></i><i></i><i></i><i class="on"></i><i></i></div></div>
</section>

<section class="phone c5">
<header class="bar"><h2>SIGN UP</h2></header>
<div class="body"><h3 class="sec mid mt20">EFFICIENCY BOOSTS</h3>
<div class="boosts mt16"><button class="arrow" aria-label="Previous"><svg width="16" height="34"><path d="M15 1L1 17L15 33" fill="none" stroke="#d5d9df"/></svg></button>
<div class="fund"><h3>Large Capitalization Stocks</h3><p class="etf">Vanguard S&amp;P 500 ETF</p><button class="add">Add Asset</button><p class="about">Characterized by mature, well-known<br>companies with market capitaliztions<br>of at least $10 billion.</p>
<div class="meter"><p><em>Risk:</em> Moderate<svg><use href="#info"/></svg></p><div><i></i><i></i><i></i><i></i><i></i><i></i><i></i><s></s><s></s><s></s></div></div>
<div class="meter"><p><em>Reward:</em> Moderate<svg><use href="#info"/></svg></p><div><i></i><i></i><i></i><i></i><i></i><i></i><i></i><i></i><s></s><s></s></div></div>
<div class="meter"><p><em>Liquity:</em> High<svg><use href="#info"/></svg></p><div><i></i><i></i><i></i><i></i><i></i><i></i><i></i><i></i><s></s><s></s></div></div></div>
<button class="arrow" aria-label="Next fund"><svg width="16" height="34"><path d="M1 1L15 17L1 33" fill="none" stroke="#d5d9df"/></svg></button></div></div>
<footer class="foot"><button class="btn">Next</button><div class="dots"><i></i><i></i><i class="on"></i><i></i><i></i><i></i></div></footer>
</section>

<section class="phone c8">
<header class="bar"><a class="back" href="#" aria-label="Back"><svg><use href="#back"/></svg></a><h2>PERSONAL INFO</h2></header>
<div class="body">
<div class="grp near mt4"><h3>MARITAL STATUS</h3><div class="radios"><label><input type="radio" name="d1" checked>Single</label><label><input type="radio" name="d1">Maried</label><label><input type="radio" name="d1">Divorced</label><label><input type="radio" name="d1">Widowed</label></div></div>
<div class="grp mt12"><h3>GENDER</h3><div class="radios"><label><input type="radio" name="d2" checked>Male</label><label><input type="radio" name="d2">Female</label></div></div>
<button class="btn push mb12 solo">Change</button></div>
<nav class="tabs t4"><a href="#"><svg><use href="#bars"/></svg>Investment</a><a href="#"><svg><use href="#pie"/></svg>Allocation</a><a href="#"><svg class="w"><use href="#swap"/></svg>Transfer</a><a href="#"><svg><use href="#gear"/></svg>Settings</a></nav>
</section>

<section class="phone"><div class="veil">
<header class="bar"><a class="back" href="#" aria-label="Back"><svg><use href="#back"/></svg></a><h2>EMPLOYMENT INFO</h2></header>
<div class="body">
<div class="grp near mt4"><h3>STATUS</h3><div class="radios"><label><input type="radio" name="e1" checked>Employed</label><label><input type="radio" name="e1">Retired</label><label><input type="radio" name="e1">Student</label><label><input type="radio" name="e1">Unemployed</label></div></div>
<h3 class="sec mt8">DETAILS</h3>
<div class="job mt4"><input class="field" value="Financial Analyst" aria-label="Occupation"><input class="field" value="Bank of America" aria-label="Employer"><input class="field" value="Financial Services" aria-label="Industry"><input class="field mt8" placeholder="Country" aria-label="Country"></div>
<hr class="rule mt16"><button class="btn push mb12 solo">Change</button></div>
<nav class="tabs t4"><a href="#"><svg><use href="#bars"/></svg>Investment</a><a href="#"><svg><use href="#pie"/></svg>Allocation</a><a href="#"><svg class="w"><use href="#swap"/></svg>Transfer</a><a href="#"><svg><use href="#gear"/></svg>Settings</a></nav></div>
<ul class="drop"><li>United States</li><li>Algeria</li><li>Brazil</li><li>China</li><li>Ecuador</li><li>France</li></ul>
</section>

<!-- Row 5 -->
<section class="phone dark">
<header class="bar"><a class="back" href="#" aria-label="Back"><svg><use href="#back"/></svg></a><h2>SIGN UP</h2></header>
<div class="partner">
<h3>Sign up with your<br>DriveWealth account</h3><svg class="seal"><use href="#wealth"/></svg>
<p class="lead">Boon will automatically fill your<br>information to match with your<br>existing DriveWealth account</p>
<h4>REVIEW PERMISSIONS</h4>
<ul class="perms"><li><svg><use href="#person"/></svg>View your basic account<br>information</li><li><svg><use href="#cast"/></svg>Execute trades on your behalf</li></ul>
<h4>LOGIN INFORMATION</h4>
<div class="login"><input class="field short" value="borkjt9" aria-label="Username"><label class="secret"><input class="field short" value="************" aria-label="Password"><svg><use href="#eye"/></svg></label></div>
<button class="signin">SIGN IN</button></div>
<div class="dots push mb8"><i class="on"></i><i></i><i></i><i></i><i></i></div>
<div class="pop done thin"><svg width="56" height="56"><use href="#bigcheck"/></svg></div>
</section>

<section class="phone demo">
<button class="skip">SKIP DEMO</button>
<div class="body"><h3 class="sec dim mt20">PERSONAL</h3>
<ul class="menu card mt8"><li>Password</li><li>Email</li><li>Address</li><li>Proof of Address</li><li>Photo ID</li><li>Personal Info</li><li>Citizenship Info</li><li>Authentication</li></ul></div>
<nav class="tabs t4"><a href="#"><svg><use href="#bars"/></svg>Investment</a><a href="#"><svg><use href="#pie"/></svg>Allocation</a><a href="#"><svg class="w"><use href="#swap"/></svg>Transfer</a><a href="#"><svg><use href="#gear"/></svg>Settings</a></nav>
<div class="tip up slim floor"><p>(6) If you have not already, head<br>over to to the settings page to<br>fill in your details. This info is<br>required before you make your<br>first transfer.</p><button>Next</button></div>
</section>

<section class="phone">
<header class="bar"><h2>SIGN UP</h2></header>
<div class="body"><h3 class="sec mid mt20">STEP 5: PHOTO ID</h3><h3 class="sec left mt8">PERSONAL PHOTO</h3><p class="small note">A passport or other form of government<br>issued identification will work</p>
<button class="photo mt8">TAP TO ADD PHOTO</button>
<button class="btn solo mt12 quiet">Next</button><div class="dots mt8 mb8"><i></i><i></i><i></i><i></i><i class="on"></i><i></i></div></div>
</section>

<section class="phone c5">
<header class="bar"><h2>ALLOCATION</h2></header>
<div class="body"><div class="donut mt32"></div>
<table class="weights mt24"><thead><tr><th>ASSETS</th><th>WEIGHTS</th></tr></thead><tbody>
<tr class="k1"><td>Total Market</td><td>12.2%</td></tr><tr class="k2"><td>S&amp;P 500</td><td>13.7%</td></tr><tr class="k3"><td>Mid Cap Stocks</td><td>12.2%</td></tr><tr class="k4"><td>Small Cap Stocks</td><td>(10.6%)</td></tr><tr class="k5"><td>Mid Cap Stocks</td><td>15.5%</td></tr></tbody></table></div>
<nav class="tabs t2"><a href="#"><svg><use href="#bars"/></svg>Investment</a><a href="#"><svg><use href="#pie"/></svg>Allocation</a><a href="#"><svg class="w"><use href="#swap"/></svg>Transfer</a><a href="#"><svg><use href="#gear"/></svg>Settings</a></nav>
</section>

<section class="phone c8">
<header class="bar"><a class="back" href="#" aria-label="Back"><svg><use href="#back"/></svg></a><h2>AUTHENTICATION</h2></header>
<div class="body"><div class="toggles mt24"><label>Touch ID<input type="checkbox"></label><label>Passcode<input type="checkbox" checked></label></div>
<button class="btn solo mt24">Change</button><p class="now center mt12">Confirm Passcode</p><div class="dots codes"><i class="on"></i><i class="on"></i><i class="on"></i><i></i></div></div>
<nav class="tabs t4"><a href="#"><svg><use href="#bars"/></svg>Investment</a><a href="#"><svg><use href="#pie"/></svg>Allocation</a><a href="#"><svg class="w"><use href="#swap"/></svg>Transfer</a><a href="#"><svg><use href="#gear"/></svg>Settings</a></nav>
</section>

<section class="phone">
<header class="bar"><a class="back" href="#" aria-label="Back"><svg><use href="#back"/></svg></a><h2>REGULATORY INFO</h2></header>
<div class="body">
<div class="grp near mt12"><p class="small">Are you affiliated with or employed by a<br>stock exchange, member firm of an<br>exchange or FINRA, or a municipal<br>securities broker-dealer?</p><div class="radios row mt12"><label><input type="radio" name="f1">Yes</label><label><input type="radio" name="f1" checked>No</label></div></div>
<div class="grp near mt8"><p class="small">Is the account holder(s) a control person of<br>a publicly traded company (e.g. Director,<br>Officer, or 10% stock holder)?</p><div class="radios row mt12"><label><input type="radio" name="f2">Yes</label><label><input type="radio" name="f2" checked>No</label></div></div>
<div class="grp near grey mt8"><p class="small">Is the account maintained for a current or<br>former Politically Exposed Person or Public<br>Official (includes U.S. and Foreign)?</p><div class="radios row mt8"><label><input type="radio" name="f3">Yes</label><label><input type="radio" name="f3" checked>No</label></div></div>
<button class="btn push mb12 solo">Change</button></div>
<nav class="tabs t4"><a href="#"><svg><use href="#bars"/></svg>Investment</a><a href="#"><svg><use href="#pie"/></svg>Allocation</a><a href="#"><svg class="w"><use href="#swap"/></svg>Transfer</a><a href="#"><svg><use href="#gear"/></svg>Settings</a></nav>
</section>

<!-- Row 6 -->
<section class="phone">
<header class="bar"><a class="back" href="#" aria-label="Back"><svg><use href="#back"/></svg></a><h2>SIGN UP</h2></header>
<div class="body"><h3 class="sec in mt16">STEP 1: LOGIN INFO</h3>
<div class="form mt4"><input class="field tight" value="borkjt9" aria-label="Username"><label class="secret"><input class="field tight" value="************" aria-label="Password"><svg><use href="#eye"/></svg></label></div>
<div class="modal flow mt12"><h3>Success!</h3><p>We have autofilled your information from<br>your DriveWealth account. Please<br>confirm all information is correct.</p><button>OK</button></div>
<hr class="rule"><h3 class="sec mt4">STEP 1: LOGIN INFO</h3>
<div class="form"><input class="field" value="John" aria-label="First name"><input class="field" value="Borkowski" aria-label="Last name"></div></div>
<footer class="foot tall"><button class="btn">Next</button><div class="dots"><i class="on"></i><i></i><i></i><i></i><i></i></div></footer>
</section>

<section class="phone demo">
<button class="skip">SKIP DEMO</button>
<div class="body"><h3 class="sec dim mt20">FINANCIAL</h3>
<ul class="menu card ghosted"><li>Income</li><li>Net Worth</li><li>Risk Profile</li><li>Employment Status</li><li></li></ul>
<div class="quick large"><div class="tip drop-tip slim"><p>That’s it, you are ready to go!<br>And remember, if you ever have<br>any questions we are just a click<br>away!</p><button>Done</button></div><a href="#"><svg><use href="#mail"/></svg>Contact us</a><a href="#"><svg><use href="#invite"/></svg>Invite user</a><a href="#"><svg><use href="#power"/></svg>Log out</a></div></div>
<nav class="tabs t4"><a href="#"><svg><use href="#bars"/></svg>Investment</a><a href="#"><svg><use href="#pie"/></svg>Allocation</a><a href="#"><svg class="w"><use href="#swap"/></svg>Transfer</a><a href="#"><svg><use href="#gear"/></svg>Settings</a></nav>
</section>

<section class="phone">
<header class="bar"><a class="back" href="#" aria-label="Back"><svg><use href="#back"/></svg></a><h2>LEGAL</h2></header>
<div class="body"><div class="switch mt20"><button class="on">Privacy Policy</button><button>Client Agreement</button></div><div class="paper mt8"></div>
<label class="agree mt8"><input type="checkbox" checked><span>I have read and agree to the terms and condions<br>stated above</span></label>
<button class="btn solo mt4 mb28">Done</button></div>
</section>

<section class="phone c9">
<header class="bar"><a class="back" href="#" aria-label="Back"><svg><use href="#back"/></svg></a><h2>LEGAL</h2></header>
<div class="body"><div class="switch mt36"><button class="on">Privacy Policy</button><button>Client Agreement</button></div><div class="paper mt8"></div>
<button class="btn solo mt8 mb12">Change</button></div>
<nav class="tabs t4"><a href="#"><svg><use href="#bars"/></svg>Investment</a><a href="#"><svg><use href="#pie"/></svg>Allocation</a><a href="#"><svg class="w"><use href="#swap"/></svg>Transfer</a><a href="#"><svg><use href="#gear"/></svg>Settings</a></nav>
</section>
</main>
</body>
</html>
```
FILE: styles.css
```css
:root {
  --navy: #091731;
  --teal: #28cdab;
  --head: #20c9a4;
  --edge: #1c9f8a;
  --grey: #858a97;
  --rule: #474e61;
}
* { box-sizing: border-box; }
body { margin: 0; background: #fff; color: #e9ebee; font: 14px/20px Lato, "Liberation Sans", sans-serif; }
h1, h2, h3, h4, p, ul { margin: 0; padding: 0; font-weight: 400; }
ul { list-style: none; }
button, input { margin: 0; padding: 0; border: 0; background: none; color: inherit; font: inherit; }
a { color: inherit; text-decoration: none; }
svg { display: block; flex: none; }
.sprite { position: absolute; width: 0; height: 0; }

.board { display: grid; grid-template-columns: repeat(9, 1fr); column-gap: 59px; row-gap: 40px; align-content: space-between; min-height: 100vh; padding: 4px; }
.c5 { grid-column: 5; }
.c8 { grid-column: 8; }
.c9 { grid-column: 9; }

/* spacing */
.mt4 { margin-top: 4px; }
.mt8 { margin-top: 8px; }
.mt12 { margin-top: 12px; }
.mt16 { margin-top: 16px; }
.mt20 { margin-top: 20px; }
.mt24 { margin-top: 24px; }
.mt28 { margin-top: 28px; }
.mt32 { margin-top: 32px; }
.mt36 { margin-top: 36px; }
.mb8 { margin-bottom: 8px; }
.mb12 { margin-bottom: 12px; }
.mb28 { margin-bottom: 28px; }
.push { margin-top: auto; }
.center { text-align: center; }

/* phone frame */
.phone { position: relative; display: flex; flex-direction: column; aspect-ratio: 9 / 16; min-width: 0; overflow: hidden; background: var(--navy); }
.bar { display: grid; grid-template-columns: 36px 1fr 36px; align-items: center; flex: none; height: 38px; margin-top: 18px; border: solid var(--rule); border-width: 1px 0; }
.bar h2 { grid-column: 2; grid-row: 1; font-size: 18px; text-align: center; white-space: nowrap; margin: 0 -30px; }
.back { grid-column: 1; grid-row: 1; justify-self: center; z-index: 1; }
.back svg { width: 12px; height: 24px; }
.body { display: flex; flex-direction: column; flex: 1; min-height: 0; overflow: hidden; }
.body > * { flex: none; }

.sec { margin-left: 19px; font-size: 16px; line-height: 20px; color: var(--head); }
.sec.mid { margin-left: 0; text-align: center; }
.sec.in { margin-left: 23px; }
.sec.left { margin-left: 29px; font-size: 15px; }
.sec.dim { color: #3f9c90; }
.rule { width: calc(100% - 18px); height: 1px; margin-bottom: 0; margin-left: 18px; margin-right: 0; border: 0; background: var(--edge); }
.modal + .rule { margin-top: 0; }

/* forms */
.form { padding: 0 38px; }
.field { display: block; width: 100%; height: 37px; padding-top: 2px; border-bottom: 1px solid var(--rule); outline: 0; }
.field::placeholder { color: var(--grey); opacity: 1; }
.field.bright::placeholder { color: #d5d9df; }
.field.tight { padding-top: 12px; }
.field.short { height: 30px; padding-top: 6px; }
.secret { display: grid; color: var(--teal); }
.secret .field { grid-area: 1 / 1; color: #d5d9df; }
.secret svg { grid-area: 1 / 1; justify-self: end; align-self: end; width: 22px; height: 16px; margin-bottom: 8px; }
.secret.off { color: #9a9a9a; }
.btn { display: block; width: 100%; height: 34px; border: 1px solid var(--edge); border-radius: 4px; color: #25b598; }
.btn.solo { width: auto; margin-left: 38px; margin-right: 38px; }
.btn.quiet { border-color: #145a5c; }
.foot { flex: none; height: 68px; padding: 6px 38px 0; border-top: 1px solid var(--rule); background: var(--navy); }
.foot .dots { margin-top: 4px; }
.foot.tall { height: 72px; padding-top: 8px; }
.foot.tall .dots { margin-top: 8px; }
.dots { display: flex; justify-content: center; gap: 4px; }
.dots i { width: 12px; height: 12px; border: 1px solid var(--edge); border-radius: 50%; }
.dots .on { border: 0; background: var(--teal); }
.dots.codes .on { background: #1de9b6; }
.hint { padding-left: 3px; font-size: 12px; line-height: 17px; }
.hint ul { padding-left: 22px; }
.now { line-height: 18px; }
.small { font-size: 12px; line-height: 15px; }
.sub { font-size: 13px; line-height: 16px; }
.note { padding-left: 33px; white-space: nowrap; }
.pair { display: grid; grid-template-columns: 88px 1fr; gap: 27px; }
.sync { display: flex; align-items: center; justify-content: space-between; width: 100%; height: 30px; padding-right: 12px; border-radius: 4px; background: #fcc013; color: #fff; font-size: 11px; font-weight: 700; white-space: nowrap; }
.pin { position: absolute; }
.lock-a { left: 223px; top: 140px; color: var(--teal); }
.usa { left: 254px; top: 145px; color: var(--teal); }
.lock-b { left: 215px; top: 176px; color: #9a9a9a; }
.lock-c { left: 239px; top: 180px; color: #9a9a9a; }

/* tab bar */
.tabs { display: flex; justify-content: space-between; flex: none; height: 51px; padding: 7px 9px 0; border-top: 1px solid var(--rule); color: #858a9b; font-size: 11px; line-height: 16px; }
.tabs a { display: flex; flex-direction: column; align-items: center; gap: 1px; }
.tabs svg { width: 24px; height: 24px; }
.tabs .w { width: 32px; }
.t1 a:nth-child(1), .t2 a:nth-child(2), .t3 a:nth-child(3), .t4 a:nth-child(4) { color: var(--teal); }

/* splash and passcode pad */
.brand { margin-top: 40px; font-size: 54px; line-height: 60px; text-align: center; color: #fff; }
.logo { width: 70px; height: 124px; margin: 28px auto 0; }
.forgot { align-self: center; font-size: 12px; color: #25b598; text-decoration: underline; }
.signup { flex: none; height: 39px; background: var(--teal); font-size: 16px; color: #fff; }
.keys { display: grid; grid-template-columns: repeat(3, 69px); grid-template-rows: 84px 69px 69px 69px; gap: 8px; justify-content: center; padding: 66px 0 0 12px; }
.keys button { height: 69px; border: 1px solid #8a8f9b; border-radius: 50%; font-size: 24px; color: #fff; }
.keys .zero { grid-column: 2; }

/* asset list */
.assets { border-top: 1px solid var(--edge); }
.stocks + .assets { border-top: 0; }
.assets li { display: grid; grid-template-columns: 34px 1fr 18px; gap: 14px; align-items: center; height: 50px; padding: 0 8px 0 16px; border-bottom: 1px solid var(--edge); font-size: 16px; font-weight: 700; color: #fff; }
.assets li > svg:first-child { justify-self: center; }
.assets .last { border: 0; padding: 2px 11px 0 13px; }
.assets sup { margin-left: 2px; font-size: 13px; font-weight: 400; line-height: 0; vertical-align: 8px; }
.stocks { display: grid; grid-template-columns: 136px 1fr; }
.stocks li { display: grid; grid-template-columns: 24px auto 1fr; gap: 10px; align-items: center; height: 42px; border-bottom: 1px solid var(--rule); }
.stocks li:nth-child(odd) { padding-left: 22px; border-right: 1px solid #6b7080; }
.stocks li:nth-child(even) { padding-left: 24px; }
.stocks li:nth-last-child(-n+2) { border-bottom-color: var(--edge); }
.stocks svg:first-child { justify-self: center; }
.stocks .tick { width: 11px; height: 11px; margin: -12px 0 0 -8px; }

/* balance, segmented switch, transactions */
.balance { display: flex; flex-direction: column; align-items: center; align-self: center; gap: 4px; }
.balance strong { width: 154px; border-bottom: 1px solid currentColor; font-size: 33px; font-weight: 300; line-height: 40px; text-align: center; }
.balance.lit { padding: 8px 14px 4px; border-radius: 5px; background: var(--navy); }
.balance.dim { color: #9b9eaa; }
.gain { align-self: center; font-size: 15px; color: #2bb79b; }
.gain.lit { padding: 6px 4px; border-radius: 5px; background: var(--navy); }
.switch { display: grid; grid-template-columns: 1fr 1fr; height: 31px; border: solid var(--edge); border-width: 1px 0; font-size: 11px; color: #25b598; }
.switch.three { grid-template-columns: 96px 95px 1fr; }
.switch button + button { border-left: 1px solid var(--edge); padding-left: 10px; }
.switch.three button + button { padding-left: 0; }
.switch .on { background: var(--teal); color: #fff; font-weight: 700; }
.moves { padding: 8px 0 0 29px; }
.moves li { display: grid; grid-template-columns: 120px 24px 48px; column-gap: 16px; align-items: start; height: 54px; border-bottom: 1px solid var(--edge); }
.moves.inset { padding: 8px 13px 0 26px; }
.moves div { display: flex; flex-direction: column; gap: 2px; padding-top: 2px; }
.moves span { text-align: right; }
.moves svg { width: 24px; height: 16px; margin-top: 25px; color: #25b598; }
.moves .out svg { color: #d8433f; }
.moves p { padding-top: 16px; font-size: 13px; line-height: 18px; text-align: center; }
.moves small { display: block; font-size: 13px; color: #77848f; }

/* settings lists */
.menu { margin-left: 21px; margin-right: 15px; font-size: 13px; line-height: 16px; }
.menu li { display: flex; justify-content: space-between; align-items: flex-end; height: 37px; padding-bottom: 4px; border-bottom: 1px solid var(--edge); }
.menu li:last-child { border: 0; }
.alert { padding-right: 24px; font-size: 22px; line-height: 22px; color: #c4182f; }
.menu.plain { margin: 0; padding: 0 0 3px 23px; border: solid var(--edge); border-width: 1px 0; }
.menu.plain li { border-color: #5a6273; padding-right: 19px; }
.menu.plain li:first-child { height: 29px; }
.menu.card { margin-left: 16px; padding-left: 19px; border: 1px solid var(--edge); border-radius: 5px; background: var(--navy); }
.menu.ghosted { min-height: 230px; background: none; border-color: #3d7f80; color: #9b9eaa; }
.menu.ghosted li, .menu.ghosted li:last-child { border-bottom: 1px solid #3d7f80; }
.quick { display: flex; justify-content: space-between; height: 81px; margin-left: 18px; margin-right: 11px; padding: 14px 12px 0 8px; border: 1px solid var(--edge); border-radius: 6px; font-size: 12px; line-height: 18px; }
.quick a { display: flex; flex-direction: column; align-items: center; }
.quick svg { width: 32px; height: 32px; }
.quick.large { position: relative; height: 93px; margin: 14px 16px 0; padding: 15px 18px 0 11px; background: var(--navy); }
.quick.large svg { width: 39px; height: 39px; margin-bottom: 6px; }

/* radios, slider, toggles */
.grp { margin-left: 18px; padding-bottom: 12px; border-bottom: 1px solid var(--edge); }
.grp.near { padding-bottom: 8px; }
.grp.grey { border-color: #596071; }
.grp h3 { font-size: 15px; line-height: 20px; color: var(--head); }
.grp .small { padding-left: 4px; white-space: nowrap; }
.radios { padding: 2px 0 0 8px; font-size: 13px; line-height: 17px; }
.radios label { display: flex; align-items: center; gap: 8px; }
.radios.row { display: flex; gap: 14px; padding: 0 0 0 20px; }
input[type=radio] { flex: none; width: 12px; height: 12px; appearance: none; border: 1px solid var(--edge); border-radius: 50%; }
input[type=radio]:checked { border: 0; background: #1de9b6; }
.years { display: block; padding: 4px 32px 0 8px; line-height: 16px; font-size: 13px; }
p.years, .years span { padding-left: 66px; }
.years span { display: block; }
input[type=range] { display: block; width: 100%; height: 20px; appearance: none; background: linear-gradient(#b9bdc5, #b9bdc5) center / 100% 2px no-repeat; }
input[type=range]::-webkit-slider-thumb { width: 20px; height: 18px; appearance: none; border-radius: 50%; background: var(--teal); }
.toggles { display: grid; gap: 12px; padding-right: 38px; font-size: 16px; line-height: 24px; }
.toggles label { display: flex; justify-content: flex-end; align-items: center; gap: 36px; }
.toggles input { width: 40px; height: 22px; appearance: none; border: 1px solid var(--edge); border-radius: 11px; }
.toggles input::before { content: ""; display: block; width: 22px; height: 22px; margin: -1px; border-radius: 50%; background: #fff; }
.toggles input:checked { background: var(--teal); border-color: var(--teal); }
.toggles input:checked::before { margin-left: 17px; }
.job { display: grid; gap: 1px; margin-left: 23px; margin-right: 52px; }

/* DriveWealth card */
.dark { background: #030712; }
.dark .bar { border-color: #20242e; color: #5d6068; }
.dark > .dots { opacity: .4; }
.partner { display: flex; flex-direction: column; flex: none; margin: 6px 18px 0 23px; border: 1px solid #1a8577; border-radius: 6px; background: var(--navy); overflow: hidden; }
.partner h3 { height: 79px; padding-top: 5px; border-bottom: 1px solid #1a8577; font-size: 16px; line-height: 23px; text-align: center; }
.seal { width: 45px; height: 45px; margin: -23px auto 0; }
.lead { margin-top: 4px; line-height: 19px; text-align: center; white-space: nowrap; }
.partner h4 { margin: 8px 0 0 16px; color: var(--head); }
.perms { display: grid; gap: 16px; padding: 12px 0 4px 24px; font-size: 10px; line-height: 14px; }
.perms li { display: grid; grid-template-columns: 28px 1fr; column-gap: 15px; align-content: center; align-items: center; height: 28px; }
.perms svg { grid-row: span 2; width: 28px; height: 28px; }
.login { padding: 0 22px 0 24px; }
.grp .login { padding: 0 37px 0 20px; }
.signin { height: 34px; margin-top: 9px; background: #20b695; font-size: 15px; }
.signin.idle { border-radius: 5px; background: #8190a5; color: #1c2b50; }
.pop { position: absolute; left: 94px; top: 183px; display: flex; flex-direction: column; align-items: center; gap: 4px; width: 94px; height: 94px; padding-top: 14px; border-radius: 5px; background: rgba(188, 187, 189, .93); }
.pop.thin { background: rgba(93, 98, 115, .88); }
.pop.wait { top: 209px; height: 83px; padding-top: 16px; gap: 6px; background: #d0d3de; color: #28324a; }

/* guided demo */
.demo { background: #42465d; }
.skip { position: relative; z-index: 1; flex: none; height: 42px; margin-top: 16px; background: var(--teal); color: #12343f; font-size: 18px; }
.skip.deep { background: #20b695; }
.skip.big { height: 51px; margin-top: 0; background: #2bbea0; }
.chart { position: absolute; left: 0; bottom: 71px; width: 100%; height: 180px; }
.demo .body { position: relative; }
.range { display: flex; justify-content: space-between; flex: none; padding: 0 22px 6px 27px; color: #82869a; position: relative; }
.range b { font-weight: 400; color: #3aa596; }
.demo .tabs { border-color: #5c6074; color: #7c8092; }
.demo .t1 a:nth-child(1), .demo .t3 a:nth-child(3), .demo .t4 a:nth-child(4) { color: #3fa898; }
.faint { background: #3c3f50; }
.faint .body, .faint .range, .faint .chart, .faint .tabs { opacity: .4; }
.ghost { position: absolute; top: 28px; left: 0; right: 0; z-index: 1; font-size: 18px; text-align: center; color: rgba(38, 160, 140, .3); }
.faint .body { margin-top: 20px; }
.modal { border-radius: 5px; background: #e4e6e8; color: #1a2440; text-align: center; }
.modal h3 { padding-top: 16px; font-size: 16px; font-weight: 700; }
.modal p { height: 66px; padding-top: 10px; font-size: 12px; line-height: 14px; white-space: nowrap; }
.modal button { display: block; width: 100%; height: 38px; border-top: 1px solid #a4a8b0; font-size: 16px; color: #4a90e2; }
.modal.thanks { position: absolute; z-index: 2; left: 20px; right: 20px; top: 235px; }
.modal.flow { margin-left: 20px; margin-right: 20px; }
.tip { position: relative; z-index: 2; display: flex; align-items: center; gap: 9px; margin-left: 20px; margin-right: 20px; padding: 10px 6px 10px 12px; border: 1px solid #2fae9c; border-radius: 5px; background: var(--navy); font-size: 10px; line-height: 14px; }
.tip p { align-self: stretch; flex: 1; border-right: 2px solid #1a7f78; white-space: nowrap; }
.tip button { width: 43px; height: 25px; border-radius: 2px; background: #20b695; color: #0c3340; font-size: 12px; font-weight: 700; }
.tip.high { min-height: 80px; }
.tip.flag { padding-top: 12px; padding-bottom: 12px; }
.tip.slim { padding-top: 6px; padding-bottom: 6px; }
.tip::before { content: ""; position: absolute; left: 50%; margin-left: -6px; border: solid transparent; border-width: 0 6px 7px; }
.tip.up::before { bottom: 100%; border-bottom-color: #3fdcbc; }
.tip.flag::before { bottom: 100%; border-width: 7px 6px 0; border-top-color: #fff; }
.tip.drop-tip::before { top: 100%; border-width: 7px 6px 0; border-top-color: #3fdcbc; }
.tip.floor { position: absolute; left: 0; right: 0; bottom: 3px; }
.tip.drop-tip { position: absolute; left: 4px; right: 4px; bottom: calc(100% + 8px); margin: 0; }
.agent { display: flex; align-items: center; gap: 43px; height: 70px; padding-left: 39px; color: #9b9eaa; }
.agent div { padding-bottom: 6px; }
.agent svg { width: 45px; height: 45px; }
.agent h3 { font-size: 18px; line-height: 22px; }
.agent p { font-size: 12px; line-height: 16px; color: #858998; }
.agent.lit { height: 78px; border-top: 1px solid var(--edge); background: var(--navy); color: #e9ebee; }
.agent.lit div { padding-bottom: 0; }
.zone { height: 18px; border-bottom: 1px solid #3a9488; background: #6e7184; color: #4a4e66; font-size: 13px; line-height: 17px; text-align: center; }
.zone.first { background: #7d8090; color: #222b47; }
.zone.part { margin-left: 13px; }
.history { align-self: center; width: 176px; height: 35px; border-radius: 5px; background: #468c85; font-size: 18px; color: #a5adba; }
.stray { right: 10px; top: 145px; font-size: 18px; color: #a5adba; }

/* security questions, photo, legal */
.asks { margin-left: 17px; margin-right: 15px; padding: 4px 0 12px 19px; border: 1px solid var(--edge); border-radius: 6px; font-size: 12px; line-height: 16px; }
.asks li { display: flex; justify-content: space-between; align-items: center; height: 42px; border-bottom: 1px solid var(--edge); white-space: nowrap; }
.pick { width: 17px; height: 17px; margin-right: 8px; }
.body > .photo { flex: 1; margin-left: 29px; margin-right: 28px; padding-bottom: 16px; border: 1px solid #757b89; background: #535a6c; color: #0f1c39; font-weight: 700; }
.body > .paper { flex: 1; border: solid #6b7180; border-width: 0 0 1px; background: #535a6c; }
.agree { display: flex; gap: 8px; height: 24px; padding-left: 14px; font-size: 9px; line-height: 12px; }
.agree input { flex: none; width: 19px; height: 19px; appearance: none; border: 2px solid #d5d9df; background: none; }
.agree input:checked::before { content: ""; display: block; width: 7px; height: 13px; margin: -2px 0 0 5px; border: solid #1de9b6; border-width: 0 3px 3px 0; transform: rotate(35deg); }

/* fund */
.boosts { display: grid; grid-template-columns: 16px 1fr 16px; align-items: start; padding: 0 11px; border-top: 1px solid var(--edge); }
.arrow { margin-top: 122px; }
.fund { display: flex; flex-direction: column; align-items: center; margin: 0 -6px; padding-top: 12px; white-space: nowrap; }
.fund h3 { font-size: 17px; font-weight: 700; line-height: 22px; color: #fff; }
.etf { font-size: 12px; line-height: 16px; }
.add { width: 104px; height: 24px; margin-top: 12px; border-radius: 12px; background: #4fe3c1; color: #12343f; font-size: 13px; font-weight: 700; }
.about { padding: 10px 0 6px; font-size: 11px; line-height: 14px; text-align: center; }
.meter { align-self: flex-start; margin-left: 22px; padding-top: 8px; font-size: 11px; line-height: 14px; }
.meter p { display: flex; gap: 3px; height: 19px; }
.meter em { color: #25b598; font-style: normal; }
.meter svg { width: 9px; height: 9px; }
.meter div { display: flex; gap: 8px; }
.meter i, .meter s { width: 12px; height: 31px; border-radius: 3px; background: #4fe3c1; }
.meter s { background: #5c5b70; }

/* allocation */
.donut { align-self: center; width: 140px; height: 140px; border-radius: 50%; background: radial-gradient(circle, var(--navy) 44px, transparent 45px), conic-gradient(#2c28c4 0 25deg, #0a47c0 0 38deg, #0a5cff 0 63deg, #0a92ff 0 88deg, #20dcb4 0 122deg, #27855b 0 147deg, #1fd163 0 178deg, #9afb22 0 213deg, #d8e82a 0 238deg, #edbf07 0 270deg, #f07c00 0 286deg, #c42000 0 310deg, #9c1b46 0 322deg, #6f1880 0 336deg, #38126f 0 358deg, #2c28c4 0); }
.weights { width: 100%; border-collapse: collapse; font-size: 11px; }
.weights th { height: 28px; padding: 0 0 0 10px; font-size: 14px; font-weight: 400; text-align: left; }
.weights th + th { padding: 0 20px 0 0; text-align: right; }
.weights td { height: 37px; padding: 0 0 0 7px; border-top: 1px solid var(--edge); }
.weights td:first-child { border-left: 10px solid #4629c9; }
.weights td + td { width: 70px; text-align: center; }
.weights .k2 td:first-child { border-left-color: #6436ff; }
.weights .k3 td:first-child { border-left-color: #0a8cff; }
.weights .k4 td:first-child { border-left-color: #06e0b4; }
.weights .k5 td:first-child { border-left-color: #058a4c; }
.weights .k5 td { height: 22px; }

/* employment drop-down */
.veil { display: flex; flex-direction: column; flex: 1; background: #1f2640; color: #b4b7c1; }
.veil .sec, .veil .grp h3 { color: #2a9a89; }
.veil .tabs { color: #7b7f8e; }
.veil .t4 a:nth-child(4) { color: #2bb397; }
.veil input:checked { background: #23bf9e; }
.veil .field { color: #9a9dab; }
.drop { position: absolute; left: 7px; top: 350px; width: 102px; padding: 4px 0 4px 13px; border: 1px solid #28cdab; border-radius: 4px; background: var(--navy); font-size: 11px; line-height: 14px; }
.drop::before { content: ""; position: absolute; left: 31px; bottom: 100%; border: solid transparent; border-width: 0 9px 10px; border-bottom-color: #1de9b6; }
```
